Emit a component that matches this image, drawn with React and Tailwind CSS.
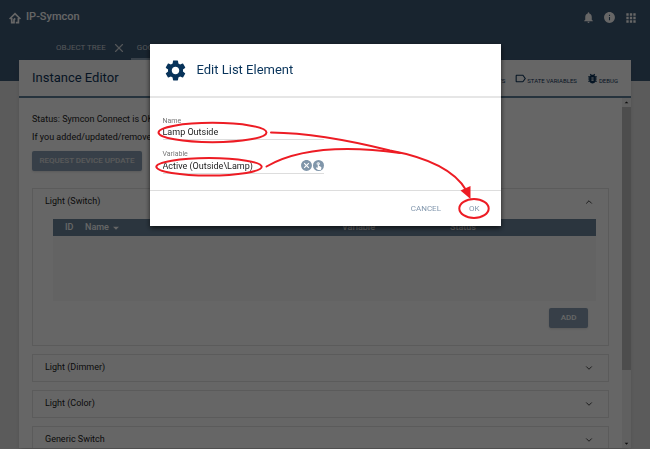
import { ChevronDown, ChevronUp, Plus, X } from "lucide-react";
import {
  MdApps,
  MdArrowDropDown,
  MdArrowDropUp,
  MdBugReport,
  MdCancel,
  MdInfo,
  MdLabelOutline,
  MdNotifications,
  MdSettings,
  MdTouchApp,
} from "react-icons/md";

const CLOSED_SECTIONS = ["Light (Dimmer)", "Light (Color)", "Generic Switch"];

function Logo() {
  return (
    <svg viewBox="0 0 12 12" className="size-3" fill="none" stroke="currentColor" strokeWidth="1.7">
      <path d="M0.6 7 L6 1.6 L11.4 7" />
      <path d="M2.7 6 V10.6 H5 V7.6 L6.2 6.4" />
      <path d="M9.4 6 V10.6 H6.8" />
    </svg>
  );
}

function TopBar() {
  return (
    <header className="h-[81px] bg-[#3e5a76] text-white">
      <div className="flex h-[35px] items-center justify-between px-[9px]">
        <div className="flex items-center gap-[5px]">
          <Logo />
          <span className="text-[11px] font-medium">IP-Symcon</span>
        </div>
        <nav className="flex items-center gap-2 pr-[3px]">
          <button type="button" aria-label="Notifications"><MdNotifications size={13} /></button>
          <button type="button" aria-label="Information"><MdInfo size={13} /></button>
          <button type="button" aria-label="Apps"><MdApps size={14} /></button>
        </nav>
      </div>
      <div className="flex h-[25px] pl-14 text-[8px] text-[#cfd6dc]">
        <button type="button" className="flex items-center gap-[6px]">
          OBJECT TREE
          <X size={14} />
        </button>
        <button type="button" className="ml-[5px] flex items-center gap-[6px] border-b-2 border-[#8ea4b8] px-[6px] pt-[2px]">
          GOOGLE ASSISTANT
          <X size={14} />
        </button>
        <button type="button" aria-label="New tab" className="px-1">
          <Plus size={12} />
        </button>
      </div>
    </header>
  );
}

function ToolButton({ icon: Icon, label }) {
  return (
    <button type="button" className="flex items-end">
      <Icon size={13} />
      <span className="text-[6px] leading-[8px]">{label}</span>
    </button>
  );
}

function OpenSection() {
  return (
    <section className="border border-[#e4e4e4] px-3 pb-[17px]">
      <button type="button" className="flex h-[26px] w-full items-center justify-between pr-[2px]">
        Light (Switch)
        <ChevronUp size={10} />
      </button>
      <div className="mt-1 ml-2 h-[82px] bg-[#f7f7f7]">
        <table className="w-full table-fixed bg-[#6b859c] text-left text-white">
          <thead>
            <tr className="h-[17px]">
              <th className="w-8 pl-3 font-medium">ID</th>
              <th className="font-medium">
                <span className="flex items-center">Name <MdArrowDropDown size={14} /></span>
              </th>
              <th className="w-[108px] font-medium">Variable</th>
              <th className="w-[146px] font-medium">Status</th>
            </tr>
          </thead>
        </table>
      </div>
      <div className="mt-[7px] flex justify-end pr-2">
        <button type="button" className="h-5 w-[39px] rounded-xs bg-[#8a9fb5] text-[8px] font-medium text-white shadow-sm">
          ADD
        </button>
      </div>
    </section>
  );
}

function InstanceEditor() {
  return (
    <main className="relative mx-[19px] -mt-[21px] flex h-[calc(100vh-61px)] flex-col overflow-hidden bg-white text-[9px] text-[#222222] shadow-md">
      <div className="flex h-[38px] shrink-0 items-center justify-between border-b-2 border-[#5f7f99] px-[13px] text-[#10365a]">
        <h1 className="text-[13px]">Instance Editor</h1>
        <div className="flex gap-[9px]">
          <ToolButton icon={MdApps} label="EVENTS" />
          <ToolButton icon={MdLabelOutline} label="STATE VARIABLES" />
          <ToolButton icon={MdBugReport} label="DEBUG" />
        </div>
      </div>
      <div className="flex min-h-0 grow">
        <div className="min-w-0 grow overflow-hidden px-[13px] py-3">
          <p className="leading-[18px]">Status: Symcon Connect is OK</p>
          <p className="leading-[18px]">If you added/updated/removed devices</p>
          <button type="button" className="mt-[5px] mb-[17px] block h-5 w-[110px] rounded-xs bg-[#8a9fb5] text-[8px] font-medium whitespace-nowrap text-[#e0e0e0] shadow-sm">
            REQUEST DEVICE UPDATE
          </button>
          <OpenSection />
          {CLOSED_SECTIONS.map((title) => (
            <section key={title} className="mt-2 border border-[#e4e4e4]">
              <button type="button" className="flex h-[26px] w-full items-center justify-between pr-[14px] pl-3">
                {title}
                <ChevronDown size={10} />
              </button>
            </section>
          ))}
        </div>
        <div className="flex w-[9px] shrink-0 flex-col items-center bg-[#f1f1f1]">
          <MdArrowDropUp size={9} />
          <div className="h-3/4 w-full bg-[#c1c1c1]" />
          <div className="grow" />
          <MdArrowDropDown size={9} />
        </div>
      </div>
    </main>
  );
}

// Red pen marks that lead from the two fields to the OK button
function Annotations() {
  return (
    <svg
      viewBox="150 44 351 182"
      className="pointer-events-none absolute inset-0 size-full"
      fill="none"
      stroke="#ed1c24"
      strokeWidth="2"
      strokeLinecap="round"
    >
      <ellipse cx="212.5" cy="132.5" rx="54" ry="9.7" />
      <ellipse cx="209" cy="166.8" rx="52.7" ry="8.7" />
      <ellipse cx="474" cy="208.5" rx="14.7" ry="9.4" />
      <path d="M271 132.5 C312 133 352 141 390 150.5 C430 158 455 171 466 190" />
      <path d="M266.5 166.5 C297 149 342 145 400 153" />
      <path d="M470.5 199 L460.5 190.5 L470.5 186 Z" fill="#ed1c24" stroke="none" />
    </svg>
  );
}

function EditDialog() {
  return (
    <div className="fixed inset-0 flex items-start justify-center bg-black/60 pt-11">
      <div
        role="dialog"
        aria-label="Edit List Element"
        className="relative w-[54%] bg-white shadow-[0_2px_5px_rgba(0,0,0,0.7)]"
      >
        <div className="flex h-[54px] items-center gap-[9px] border-b-2 border-[#e6e6e6] px-[13px] text-[#08335a]">
          <MdSettings size={25} />
          <h2 className="text-[13px]">Edit List Element</h2>
        </div>
        <div className="flex h-[92px] flex-col px-[13px] pt-[19px] text-[9px] text-[#222222]">
          <label htmlFor="name" className="text-[7px] leading-[8px] text-[#777777]">Name</label>
          <input id="name" defaultValue="Lamp Outside" className="mb-[10px] h-[15px] w-[161px] border-b border-[#dddddd]" />
          <label htmlFor="variable" className="text-[7px] leading-[8px] text-[#777777]">Variable</label>
          <div className="flex h-4 w-[161px] items-center border-b border-[#dddddd] text-[#8096aa]">
            <input id="variable" defaultValue="Active (Outside\Lamp)" className="h-4 min-w-0 grow text-[#222222]" />
            <button type="button" aria-label="Clear variable">
              <MdCancel size={13} />
            </button>
            <button
              type="button"
              aria-label="Select variable"
              className="flex size-[11px] items-center justify-center rounded-full bg-[#8096aa] text-white"
            >
              <MdTouchApp size={9} />
            </button>
          </div>
        </div>
        <div className="flex h-9 items-center justify-end gap-7 border-t border-[#dddddd] pr-[21px] text-[8px] text-[#8297ad]">
          <button type="button">CANCEL</button>
          <button type="button">OK</button>
        </div>
        <Annotations />
      </div>
    </div>
  );
}

export default function App() {
  return (
    <div className="min-h-screen bg-[#e4e4e4] font-['Roboto',sans-serif]">
      <TopBar />
      <InstanceEditor />
      <EditDialog />
    </div>
  );
}
